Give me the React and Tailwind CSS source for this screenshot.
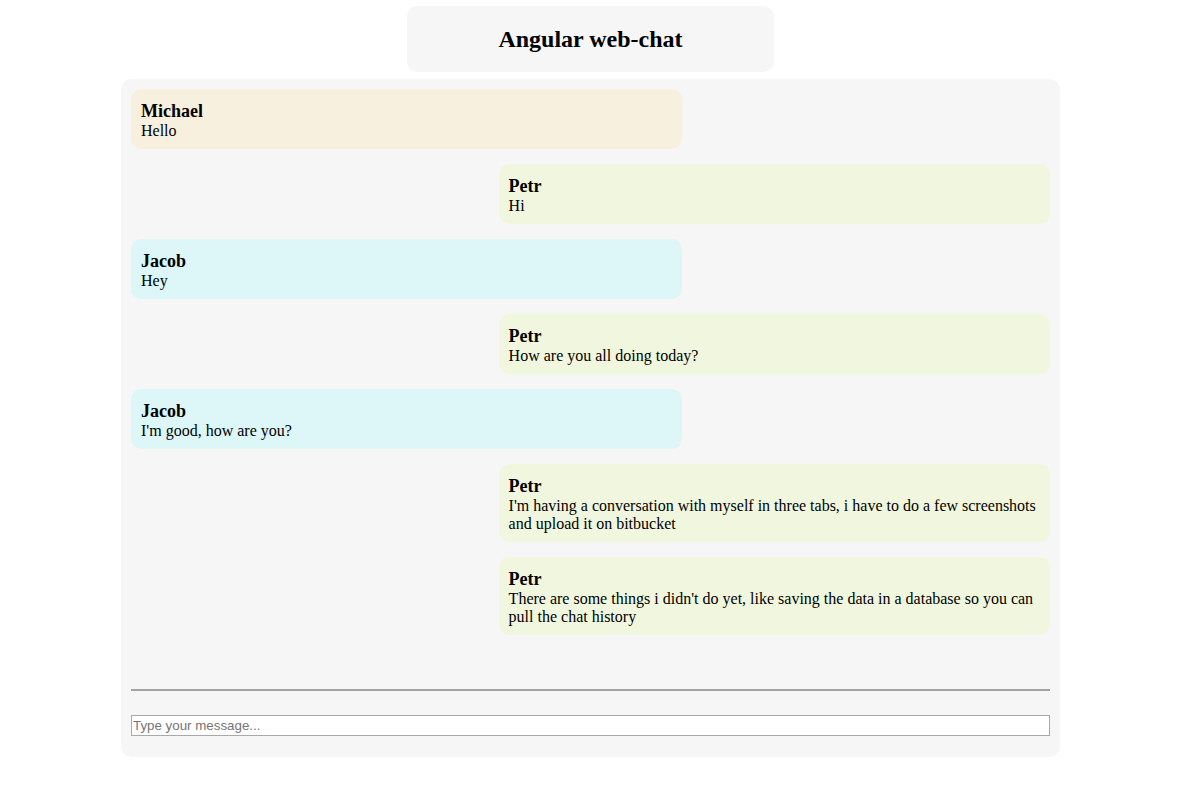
import React from "react";

const colors = {
  Michael: "bg-[#f8f0df]",
  Petr: "bg-[#f1f7de]",
  Jacob: "bg-[#ddf6f7]",
};

const messages = [
  { author: "Michael", text: "Hello", mine: false },
  { author: "Petr", text: "Hi", mine: true },
  { author: "Jacob", text: "Hey", mine: false },
  { author: "Petr", text: "How are you all doing today?", mine: true },
  { author: "Jacob", text: "I'm good, how are you?", mine: false },
  {
    author: "Petr",
    text: "I'm having a conversation with myself in three tabs, i have to do a few screenshots and upload it on bitbucket",
    mine: true,
  },
  {
    author: "Petr",
    text: "There are some things i didn't do yet, like saving the data in a database so you can pull the chat history",
    mine: true,
  },
];

const Bubble = ({ msg }) => (
  <div
    className={`w-[60%] rounded-[10px] px-[10px] pt-[11px] pb-[9px] mb-[15px] ${colors[msg.author]} ${
      msg.mine ? "self-end" : "self-start"
    }`}
  >
    <div className="text-[18px] font-bold leading-[22px]">{msg.author}</div>
    <div className="text-[16px] leading-[18px]">{msg.text}</div>
  </div>
);

export default function App() {
  return (
    <div className="min-h-screen bg-white text-black font-['Liberation_Serif','Times_New_Roman',serif] pt-[6px]">
      {/* header */}
      <div className="mx-auto w-[367px] h-[66px] rounded-[10px] bg-[#f6f6f7] flex items-center justify-center">
        <h1 className="text-[24px] font-bold">Angular web-chat</h1>
      </div>

      {/* chat panel */}
      <div className="mx-auto mt-[7px] w-[939px] rounded-[10px] bg-[#f6f6f6] p-[10px] pb-[21px]">
        <div className="h-[600px] flex flex-col overflow-hidden">
          {messages.map((m, i) => (
            <Bubble key={i} msg={m} />
          ))}
        </div>
        <div className="h-[2px] bg-[#a3a3a3]" />
        <input
          type="text"
          placeholder="Type your message..."
          className="mt-[24px] block w-full h-[21px] border border-[#a9a9a9] bg-white px-[1px] text-[13.33px] font-['Liberation_Sans',Arial,sans-serif] placeholder:text-[#757575] outline-none"
        />
      </div>
    </div>
  );
}
